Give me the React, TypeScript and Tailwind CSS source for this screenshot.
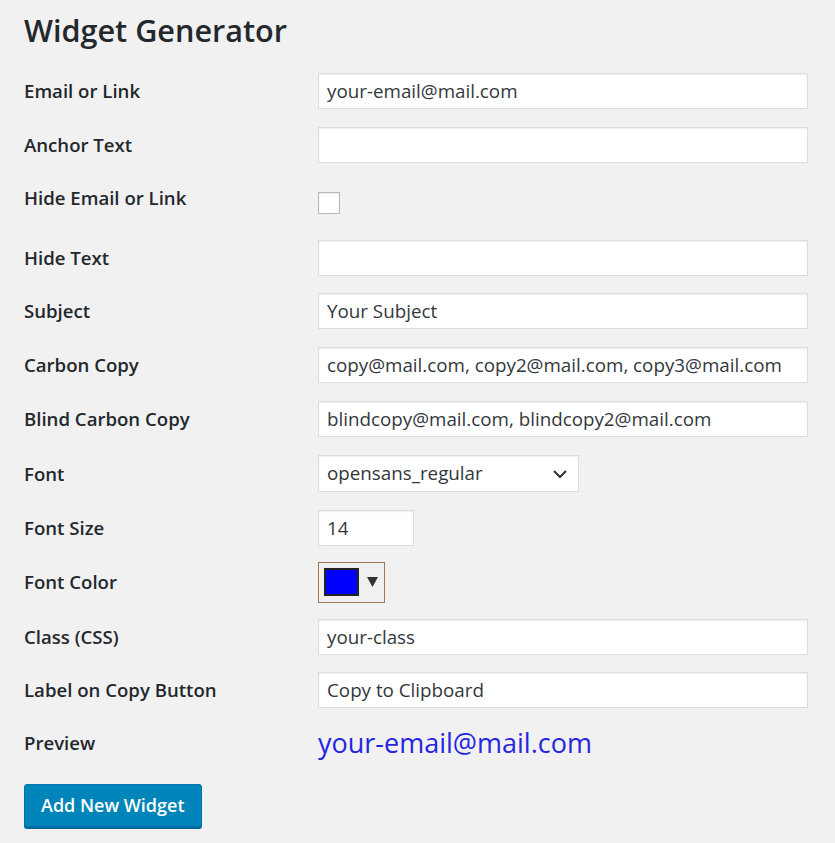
import { useState } from "react";

type Row = {
  label: string;
  h: string;
  kind: "text" | "check" | "select" | "size" | "color" | "preview";
  value?: string;
};

const rows: Row[] = [
  { label: "Email or Link", h: "h-[54px]", kind: "text", value: "your-email@mail.com" },
  { label: "Anchor Text", h: "h-[53px]", kind: "text", value: "" },
  { label: "Hide Email or Link", h: "h-[63px]", kind: "check" },
  { label: "Hide Text", h: "h-[48px]", kind: "text", value: "" },
  { label: "Subject", h: "h-[58px]", kind: "text", value: "Your Subject" },
  { label: "Carbon Copy", h: "h-[50px]", kind: "text", value: "copy@mail.com, copy2@mail.com, copy3@mail.com" },
  { label: "Blind Carbon Copy", h: "h-[57px]", kind: "text", value: "blindcopy@mail.com, blindcopy2@mail.com" },
  { label: "Font", h: "h-[53px]", kind: "select", value: "opensans_regular" },
  { label: "Font Size", h: "h-[55px]", kind: "size", value: "14" },
  { label: "Font Color", h: "h-[54px]", kind: "color" },
  { label: "Class (CSS)", h: "h-[55px]", kind: "text", value: "your-class" },
  { label: "Label on Copy Button", h: "h-[51px]", kind: "text", value: "Copy to Clipboard" },
  { label: "Preview", h: "h-[56px]", kind: "preview" },
];

const inputCls =
  "h-[36px] rounded-none border border-[#dddddd] bg-white px-[8px] text-[18.8px] text-[#32373c] shadow-[inset_0_1px_2px_rgba(0,0,0,0.07)] outline-none";

function Field({ row }: { row: Row }) {
  const [val, setVal] = useState(row.value ?? "");

  if (row.kind === "check") {
    return (
      <input
        type="checkbox"
        className="h-[22px] w-[22px] appearance-none border border-[#b4b9be] bg-white shadow-[inset_0_1px_2px_rgba(0,0,0,0.1)]"
      />
    );
  }
  if (row.kind === "select") {
    return (
      <div className={`${inputCls} flex h-[37px] w-[261px] items-center justify-between pr-[10px]`}>
        <span>{val}</span>
        <svg width="16" height="10" viewBox="0 0 16 10" fill="none">
          <path d="M2 2l6 6 6-6" stroke="#32373c" strokeWidth="2.2" />
        </svg>
      </div>
    );
  }
  if (row.kind === "size") {
    return <input value={val} onChange={(e) => setVal(e.target.value)} className={`${inputCls} w-[96px]`} />;
  }
  if (row.kind === "color") {
    return (
      <button
        type="button"
        className="flex h-[41px] w-[67px] items-center gap-[8px] border border-[#9b7b5b] bg-[#f0f0f0] pl-[5px]"
      >
        <span className="h-[28px] w-[35px] border-2 border-[#222222] bg-[#0000ff]" />
        <svg width="11" height="10" viewBox="0 0 11 10">
          <path d="M0 0h11L5.5 10z" fill="#333333" />
        </svg>
      </button>
    );
  }
  if (row.kind === "preview") {
    return <span className="text-[27px] text-[#2626e0]">your-email@mail.com</span>;
  }
  return <input value={val} onChange={(e) => setVal(e.target.value)} className={`${inputCls} w-[490px]`} />;
}

export default function App() {
  return (
    <div className="min-h-[843px] w-[835px] bg-[#f1f1f1] pl-[24px] font-['Open_Sans',sans-serif] text-[#23282d]">
      <h1 className="h-[64px] pt-[8px] text-[30.6px] font-semibold leading-[44px]">Widget Generator</h1>
      <div className="flex flex-col">
        {rows.map((row) => (
          <div key={row.label} className={`flex items-center ${row.h}`}>
            <div className={`w-[294px] text-[18.6px] font-semibold ${row.kind === "check" ? "pb-[9px]" : ""}`}>
              {row.label}
            </div>
            <Field row={row} />
          </div>
        ))}
        <div className="flex h-[69px] items-center">
          <button
            type="button"
            className="h-[43px] rounded-[3px] border border-[#0073aa] bg-[#0085ba] px-[16px] text-[18px] font-semibold text-white shadow-[0_2px_0_#006799]"
          >
            Add New Widget
          </button>
        </div>
      </div>
    </div>
  );
}
